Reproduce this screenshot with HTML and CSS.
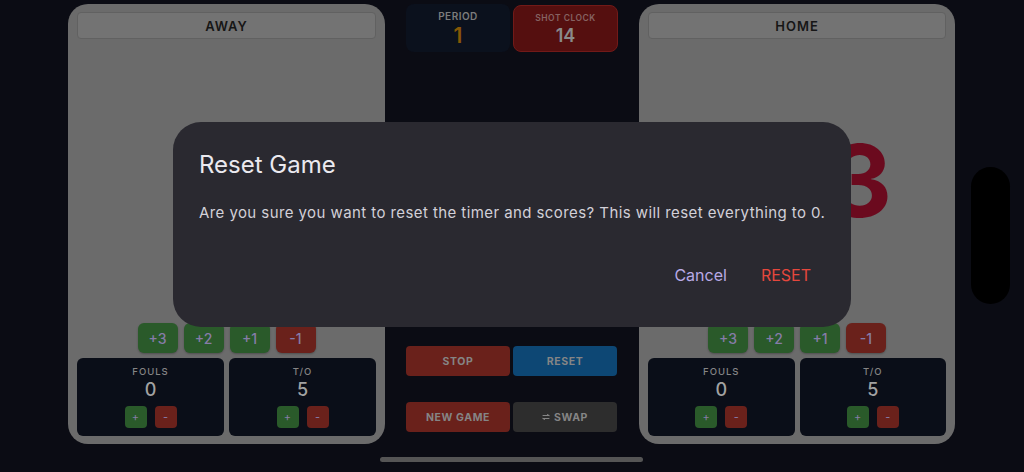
FILE: index.html
```html
<!DOCTYPE html>
<html lang="en">

<head>
    <meta charset="UTF-8">
    <meta name="viewport" content="width=device-width, initial-scale=1.0">
    <title>Scoreboard</title>
    <link rel="stylesheet" href="styles.css">
</head>

<body>
    <div class="board">
        <div class="team-panel">
            <div class="team-name">AWAY</div>
            <div class="score-area"></div>
            <div class="score-buttons">
                <div class="score-btn plus">+3</div>
                <div class="score-btn plus">+2</div>
                <div class="score-btn plus">+1</div>
                <div class="score-btn minus">-1</div>
            </div>
            <div class="stats">
                <div class="stat-box">
                    <div class="stat-label">FOULS</div>
                    <div class="stat-value">0</div>
                    <div class="stat-buttons">
                        <div class="small-btn plus">+</div>
                        <div class="small-btn minus">-</div>
                    </div>
                </div>
                <div class="stat-box">
                    <div class="stat-label">T/O</div>
                    <div class="stat-value">5</div>
                    <div class="stat-buttons">
                        <div class="small-btn plus">+</div>
                        <div class="small-btn minus">-</div>
                    </div>
                </div>
            </div>
        </div>

        <div class="center-column">
            <div class="info-row">
                <div class="info-box period">
                    <div class="info-label">PERIOD</div>
                    <div class="info-value">1</div>
                </div>
                <div class="info-box shot-clock">
                    <div class="info-label">SHOT CLOCK</div>
                    <div class="info-value">14</div>
                </div>
            </div>
            <div class="controls">
                <div class="control-row">
                    <div class="control-btn red">STOP</div>
                    <div class="control-btn blue">RESET</div>
                </div>
                <div class="control-row">
                    <div class="control-btn red">NEW GAME</div>
                    <div class="control-btn gray">
                        <svg width="8" height="6" viewBox="0 0 8 6" fill="none" stroke="currentColor"
                            stroke-width="1" stroke-linecap="round" stroke-linejoin="round">
                            <path d="M1 1.5h6M5.5 0.5l1.5 1"></path>
                            <path d="M7 4.5h-6M2.5 5.5l-1.5-1"></path>
                        </svg>
                        SWAP
                    </div>
                </div>
            </div>
        </div>

        <div class="team-panel home">
            <div class="team-name">HOME</div>
            <div class="score-area">
                <div class="score">3</div>
            </div>
            <div class="score-buttons">
                <div class="score-btn plus">+3</div>
                <div class="score-btn plus">+2</div>
                <div class="score-btn plus">+1</div>
                <div class="score-btn minus">-1</div>
            </div>
            <div class="stats">
                <div class="stat-box">
                    <div class="stat-label">FOULS</div>
                    <div class="stat-value">0</div>
                    <div class="stat-buttons">
                        <div class="small-btn plus">+</div>
                        <div class="small-btn minus">-</div>
                    </div>
                </div>
                <div class="stat-box">
                    <div class="stat-label">T/O</div>
                    <div class="stat-value">5</div>
                    <div class="stat-buttons">
                        <div class="small-btn plus">+</div>
                        <div class="small-btn minus">-</div>
                    </div>
                </div>
            </div>
        </div>
    </div>

    <div class="island"></div>
    <div class="home-indicator"></div>

    <div class="backdrop">
        <div class="dialog">
            <h2>Reset Game</h2>
            <p>Are you sure you want to reset the timer and scores? This will reset everything to 0.</p>
            <div class="dialog-actions">
                <div class="dialog-btn cancel">Cancel</div>
                <div class="dialog-btn confirm">RESET</div>
            </div>
        </div>
    </div>
</body>

</html>
```

FILE: styles.css
```css
* {
    margin: 0;
    padding: 0;
    box-sizing: border-box;
    font-family: Inter, "Noto Sans", sans-serif;
}

body {
    width: 1024px;
    height: 472px;
    overflow: hidden;
    background-color: #0b0c14;
    position: relative;
}

.board {
    display: flex;
    padding: 4px 0 0 68px;
    height: 444px;
}

.team-panel {
    width: 317px;
    height: 440px;
    background-color: #6b6b6b;
    border-radius: 20px;
    display: flex;
    flex-direction: column;
    padding: 8px 9px 8px 9px;
}

.team-panel.home {
    width: 316px;
}

.team-name {
    height: 27px;
    background-color: #737373;
    border: 1px solid #616161;
    border-radius: 4px;
    display: flex;
    align-items: center;
    justify-content: center;
    font-size: 13px;
    font-weight: 600;
    letter-spacing: 1px;
    color: #161616;
}

.score-area {
    flex: 1;
    display: flex;
    align-items: center;
    justify-content: center;
}

.score {
    font-size: 100px;
    font-weight: 700;
    line-height: 1;
    color: #6b0a1e;
}

.home .score-area {
    justify-content: flex-end;
    padding-right: 54px;
}

.score-buttons {
    display: flex;
    justify-content: center;
    gap: 6px;
    margin-bottom: 5px;
}

.score-btn {
    width: 40px;
    height: 30px;
    border-radius: 6px;
    display: flex;
    align-items: center;
    justify-content: center;
    font-size: 14px;
    font-weight: 500;
    color: #867ca8;
    box-shadow: 0 1px 2px rgba(0, 0, 0, 0.25);
}

.plus {
    background-color: #2a5a2a;
}

.minus {
    background-color: #6a211b;
}

.stats {
    display: flex;
    gap: 5px;
}

.stat-box {
    flex: 1;
    height: 78px;
    background-color: #0a0e18;
    border-radius: 6px;
    display: flex;
    flex-direction: column;
    align-items: center;
    padding-top: 8px;
}

.stat-label {
    font-size: 9.5px;
    font-weight: 500;
    letter-spacing: 1px;
    color: #858585;
}

.stat-value {
    font-size: 18px;
    font-weight: 500;
    color: #a2a2a2;
    margin-top: 2px;
    line-height: 22px;
}

.stat-buttons {
    display: flex;
    gap: 8px;
    margin-top: 5px;
}

.small-btn {
    width: 22px;
    height: 22px;
    border-radius: 4px;
    display: flex;
    align-items: center;
    justify-content: center;
    font-size: 11px;
    color: #867ca8;
}

.center-column {
    width: 212px;
    margin: 0 21px;
    display: flex;
    flex-direction: column;
    justify-content: space-between;
    padding-bottom: 12px;
}

.info-row {
    display: flex;
    gap: 3px;
}

.info-box {
    width: 104px;
    height: 48px;
    border-radius: 8px;
    display: flex;
    flex-direction: column;
    align-items: center;
    padding-top: 6px;
}

.period {
    background-color: #0b111d;
}

.shot-clock {
    width: 105px;
    margin-top: 1px;
    height: 47px;
    background-color: #550f0f;
    border: 1px solid #721a18;
}

.info-label {
    font-size: 10px;
    font-weight: 600;
    letter-spacing: 0.5px;
    color: #7c7c7c;
}

.shot-clock .info-label {
    font-size: 8.5px;
    color: #866262;
    padding-top: 1px;
}

.info-value {
    font-size: 21px;
    font-weight: 600;
    line-height: 26px;
    color: #865806;
    margin-top: 1px;
}

.shot-clock .info-value {
    color: #8a8a8a;
    font-size: 18px;
    line-height: 24px;
}

.controls {
    display: flex;
    flex-direction: column;
    gap: 26px;
}

.control-row {
    display: flex;
    gap: 3px;
}

.control-btn {
    width: 104px;
    height: 30px;
    border-radius: 4px;
    display: flex;
    align-items: center;
    justify-content: center;
    gap: 4px;
    font-size: 10.5px;
    font-weight: 700;
    letter-spacing: 0.6px;
    color: #858585;
}

.control-btn.red {
    background-color: #6a211b;
}

.control-btn.blue {
    background-color: #0d4774;
}

.control-btn.gray {
    background-color: #2d2d2d;
}

.island {
    position: absolute;
    left: 971px;
    top: 167px;
    width: 39px;
    height: 137px;
    background-color: #000;
    border-radius: 20px;
}

.home-indicator {
    position: absolute;
    left: 380px;
    top: 457px;
    width: 263px;
    height: 5px;
    background-color: #555;
    border-radius: 3px;
}

.backdrop {
    position: absolute;
    inset: 0;
    display: flex;
    justify-content: center;
    padding-top: 122px;
}

.dialog {
    width: 678px;
    height: 205px;
    background-color: #2a2930;
    border-radius: 28px;
    padding: 27px 20px 0 26px;
}

.dialog h2 {
    font-size: 24px;
    font-weight: 400;
    line-height: 32px;
    color: #ebe9ef;
}

.dialog p {
    margin-top: 21px;
    font-size: 15px;
    line-height: 22px;
    letter-spacing: 0.42px;
    white-space: nowrap;
    color: #d2d0d8;
}

.dialog-actions {
    display: flex;
    justify-content: flex-end;
    gap: 10px;
    margin-top: 33px;
    padding-right: 8px;
}

.dialog-btn {
    font-size: 16px;
    font-weight: 400;
    padding: 8px 12px;
}

.cancel {
    color: #b9a9e6;
}

.confirm {
    color: #e5473d;
}
```
